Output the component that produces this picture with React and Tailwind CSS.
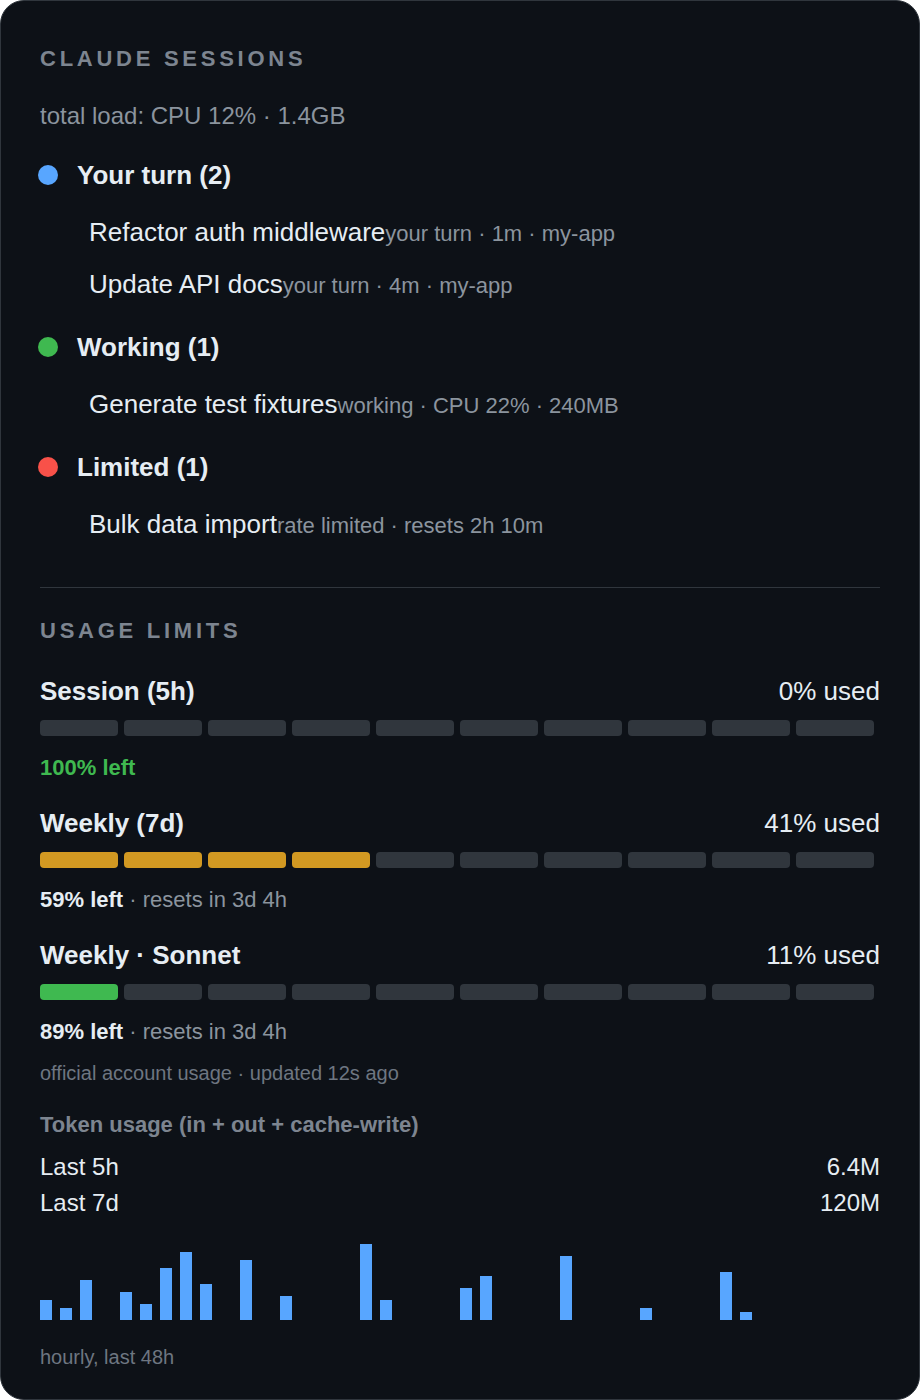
const groups = [
  {
    label: 'Your turn (2)',
    dot: 'bg-[#58a6ff]',
    sessions: [
      { title: 'Refactor auth middleware', meta: 'your turn · 1m · my-app' },
      { title: 'Update API docs', meta: 'your turn · 4m · my-app' },
    ],
  },
  {
    label: 'Working (1)',
    dot: 'bg-[#3fb950]',
    sessions: [{ title: 'Generate test fixtures', meta: 'working · CPU 22% · 240MB' }],
  },
  {
    label: 'Limited (1)',
    dot: 'bg-[#f85149]',
    sessions: [{ title: 'Bulk data import', meta: 'rate limited · resets 2h 10m' }],
  },
];

const limits = [
  { name: 'Session (5h)', used: 0, fill: 'bg-[#3fb950]', left: '100% left', leftClass: 'text-[#3fb950]', reset: null },
  { name: 'Weekly (7d)', used: 41, fill: 'bg-[#d29922]', left: '59% left', leftClass: 'text-[#e6edf3]', reset: 'resets in 3d 4h' },
  { name: 'Weekly · Sonnet', used: 11, fill: 'bg-[#3fb950]', left: '89% left', leftClass: 'text-[#e6edf3]', reset: 'resets in 3d 4h' },
];

// tokens per hour, scaled to px
const hourly = [
  20, 12, 40, 0, 28, 16, 52, 68, 36, 0, 60, 0, 24, 0, 0, 0, 76, 20, 0, 0, 0,
  32, 44, 0, 0, 0, 64, 0, 0, 0, 12, 0, 0, 0, 48, 8, 0, 0, 0, 0, 0, 0,
];

const SectionTitle = ({ children, className = '' }) => (
  <div className={`text-[22px] leading-[30px] font-bold tracking-[0.17em] text-[#7d8590] ${className}`}>
    {children}
  </div>
);

const Segments = ({ used, fill }) => {
  const lit = used === 0 ? 0 : Math.max(1, Math.round(used / 10));
  return (
    <div className="flex mt-[13px]">
      {Array.from({ length: 10 }).map((_, i) => (
        <div
          key={i}
          className={`flex-1 h-[16px] rounded-[4px] mr-[6px] ${i < lit ? fill : 'bg-[#30363d]'}`}
        />
      ))}
    </div>
  );
};

export default function App() {
  return (
    <div className="bg-white w-[920px] h-[1400px]" style={{ fontFamily: '"Liberation Sans", Arial, sans-serif' }}>
      <div className="w-[920px] h-[1400px] rounded-[24px] border border-[#30363d] bg-[#0d1117] px-[39px] pt-[43px] overflow-hidden">
        <SectionTitle>CLAUDE SESSIONS</SectionTitle>
        <div className="mt-[26px] text-[24px] leading-[32px] text-[#8b949e]">total load: CPU 12% · 1.4GB</div>

        {groups.map((g, gi) => (
          <div key={g.label}>
            <div className={`${gi === 0 ? 'mt-[27px]' : 'mt-[31px]'} flex items-center h-[32px]`}>
              <span className={`w-[20px] h-[20px] rounded-full -ml-[2px] mr-[19px] ${g.dot}`} />
              <span className="text-[26px] leading-[32px] font-bold text-[#e6edf3]">{g.label}</span>
            </div>
            <div className="flex flex-col gap-[20px] mt-[25px] pl-[49px]">
              {g.sessions.map((s) => (
                <div key={s.title} className="flex items-baseline h-[32px] leading-[32px] overflow-hidden">
                  <span className="text-[26px] text-[#e6edf3]">{s.title}</span>
                  <span className="text-[22px] text-[#8b949e]">{s.meta}</span>
                </div>
              ))}
            </div>
          </div>
        ))}

        <div className="mt-[47px] h-px bg-[#30363d]" />

        <SectionTitle className="mt-[28px]">USAGE LIMITS</SectionTitle>

        {limits.map((l, idx) => (
          <div key={l.name} className={idx === 0 ? 'mt-[29px]' : 'mt-[25px]'}>
            <div className="flex justify-between items-baseline text-[26px] leading-[32px] text-[#e6edf3]">
              <span className="font-bold">{l.name}</span>
              <span>{l.used}% used</span>
            </div>
            <Segments used={l.used} fill={l.fill} />
            <div className="mt-[18px] text-[22px] leading-[28px]">
              <span className={`font-bold ${l.leftClass}`}>{l.left}</span>
              {l.reset && <span className="text-[#8b949e]"> · {l.reset}</span>}
            </div>
          </div>
        ))}

        <div className="mt-[13px] text-[20px] leading-[28px] text-[#6e7681]">
          official account usage · updated 12s ago
        </div>

        <div className="mt-[24px] text-[22px] leading-[28px] font-bold text-[#7d8590]">
          Token usage (in + out + cache-write)
        </div>
        <div className="mt-[10px] text-[24px] leading-[36px] text-[#e6edf3]">
          <div className="flex justify-between">
            <span>Last 5h</span>
            <span>6.4M</span>
          </div>
          <div className="flex justify-between">
            <span>Last 7d</span>
            <span>120M</span>
          </div>
        </div>

        <div className="mt-[19px] h-[80px] flex items-end gap-[8px]">
          {hourly.map((h, i) => (
            <div key={i} className="w-[12px] bg-[#58a6ff]" style={{ height: h }} />
          ))}
        </div>

        <div className="mt-[23px] text-[20px] leading-[28px] text-[#6e7681]">hourly, last 48h</div>
      </div>
    </div>
  );
}
